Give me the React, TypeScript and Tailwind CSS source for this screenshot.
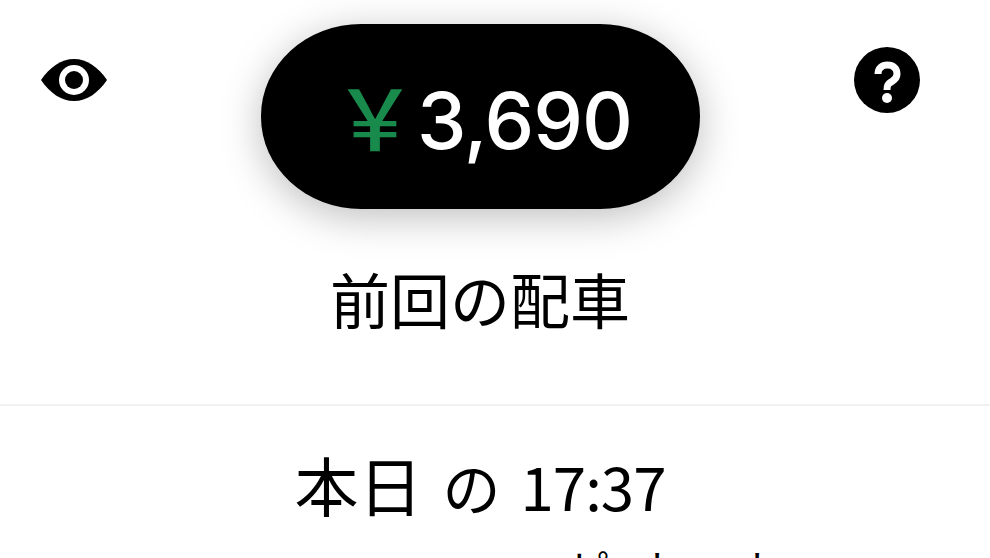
const jp = { fontFamily: '"Noto Sans CJK JP", sans-serif' };

export default function App() {
  return (
    <div className="h-[558px] w-[990px] overflow-hidden bg-white text-black" style={jp}>
      {/* Top bar */}
      <div className="flex h-[233px] items-start pt-6">
        <div className="flex w-[261px] justify-start pl-[41px] pt-[35px]">
          <EyeIcon />
        </div>
        <div className="flex h-[185px] w-[439px] items-center justify-center rounded-[100px/92px] bg-black pl-[4px] pt-2 shadow-[0_8px_40px_rgba(0,0,0,0.26)]">
          <span className="mb-3 text-[84px] font-medium leading-none text-[#188a4c]">￥</span>
          <span className="text-[79px] font-medium leading-none tracking-[-1px] text-white [font-family:Inter,sans-serif]">3,690</span>
        </div>
        <div className="flex flex-1 pl-[154px] pt-[23px]">
          <HelpIcon />
        </div>
      </div>

      {/* Title */}
      <div className="flex h-[173px] justify-center border-b-2 border-[#f1f1f1] pr-[30px] pt-[32px]">
        <span className="text-[60px] font-normal leading-[1.1]">前回の配車</span>
      </div>

      {/* Trip time */}
      <div className="flex items-baseline justify-center gap-[20px] pr-[30px] pt-[45px] text-[64px] leading-none">
        <span>本日</span>
        <span className="text-[58px]">の</span>
        <span className="text-[60px] tracking-[-1px]">17:37</span>
      </div>

      {/* Cut-off line at the bottom edge */}
      <div className="flex pl-[570px] pt-[32px] text-[40px] leading-none">
        <span>ピ</span>
        <span className="ml-[32px]">ト</span>
        <span className="ml-[60px]">ト</span>
      </div>
    </div>
  );
}

function EyeIcon() {
  return (
    <svg width="66" height="42" viewBox="0 0 66 42">
      <path d="M0 21C9 8 20 0 33 0s24 8 33 21c-9 13-20 21-33 21S9 34 0 21Z" fill="#000" />
      <circle cx="33" cy="21" r="15" fill="#fff" />
      <circle cx="33" cy="21" r="9" fill="#000" />
    </svg>
  );
}

function HelpIcon() {
  return (
    <svg width="66" height="66" viewBox="0 0 66 66">
      <circle cx="33" cy="33" r="33" fill="#000" />
      <path d="M24 27c0-6 4-9 9.500-9s9.500 3 9.500 9c0 5-3 6-6 8-3 2-4 3-4 8" fill="none" stroke="#fff" strokeWidth="7" />
      <circle cx="33" cy="51" r="5" fill="#fff" />
    </svg>
  );
}
